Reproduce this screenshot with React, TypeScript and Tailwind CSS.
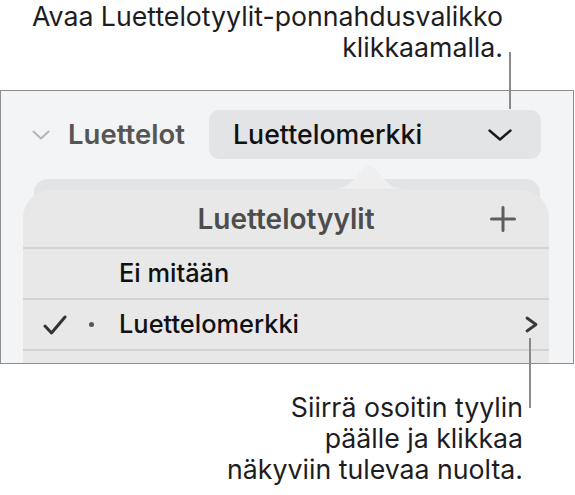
import React from "react";

export default function App() {
  return (
    <div className="relative w-[575px] h-[495px] bg-white font-['Inter','Noto_Sans',sans-serif] text-[#1d1d1f]">
      <div className="pt-[1px] pr-[72px] text-right text-[26.7px] leading-[31px] whitespace-nowrap">
        <div>Avaa Luettelotyylit-ponnahdusvalikko</div>
        <div>klikkaamalla.</div>
      </div>

      <div className="mt-[27px] w-[574px] h-[274px] border border-[#8e8e8e] bg-[#f3f4f6] overflow-hidden">
        <div className="mt-[19px] flex items-center h-[49px] pl-[31px]">
          <svg width="18" height="10" viewBox="0 0 18 10">
            <polyline points="1.5,1.5 9,8.5 16.5,1.5" fill="none" stroke="#b5b5b5" strokeWidth="2" strokeLinecap="round" strokeLinejoin="round" />
          </svg>
          <span className="ml-[18px] text-[27.5px] font-semibold text-[#555555] whitespace-nowrap">Luettelot</span>
          <div className="ml-auto mr-[32px] w-[332px] h-[49px] rounded-[10px] bg-[#e3e4e6] flex items-center justify-between pl-[24px] pr-[29px]">
            <span className="text-[26.7px] font-medium text-[#111111] whitespace-nowrap">Luettelomerkki</span>
            <svg width="24" height="12" viewBox="0 0 24 12">
              <polyline points="1.5,1.5 12,10.5 22.5,1.5" fill="none" stroke="#1a1a1a" strokeWidth="2.4" strokeLinecap="round" strokeLinejoin="round" />
            </svg>
          </div>
        </div>

        <div className="relative mt-[20px] ml-[33px] w-[506px] rounded-[14px] bg-[#e3e4e6] pt-[11px]">
          <svg className="absolute left-[300px] top-[-14px]" width="70" height="25" viewBox="0 0 70 25">
            <path d="M2,24 C20,23 26,1 35,1 C44,1 50,23 68,24 Z" fill="#efeff0" />
          </svg>
          <div className="ml-[-11px] mr-[-9px] rounded-t-[28px] bg-[#e8e8e8]">
            <div className="grid grid-cols-[1fr_auto_1fr] items-center h-[57px]">
              <div />
              <span className="text-[28px] font-semibold text-[#4d4d4d] whitespace-nowrap">Luettelotyylit</span>
              <svg className="justify-self-end mr-[33px]" width="26" height="26" viewBox="0 0 26 26">
                <path d="M13,1.5 V24.5 M1.5,13 H24.5" stroke="#5e5e5e" strokeWidth="3" strokeLinecap="round" />
              </svg>
            </div>
            <div className="h-[2px] bg-[#d3d3d3]" />
            <div className="flex items-center h-[49px] pl-[96px]">
              <span className="text-[25.4px] font-medium text-[#111111] whitespace-nowrap">Ei mitään</span>
            </div>
            <div className="h-[2px] bg-[#d3d3d3]" />
            <div className="flex items-center h-[49px] pl-[20px]">
              <svg width="24" height="20" viewBox="0 0 24 20">
                <polyline points="2,11 8.5,18 22,2" fill="none" stroke="#333333" strokeWidth="3" strokeLinecap="round" strokeLinejoin="round" />
              </svg>
              <div className="ml-[22px] w-[5px] h-[5px] rounded-full bg-[#555555]" />
              <span className="ml-[25px] text-[25.4px] font-medium text-[#111111] whitespace-nowrap">Luettelomerkki</span>
              <svg className="ml-auto mr-[11px]" width="13" height="17" viewBox="0 0 13 17">
                <polyline points="2,2 11,8.5 2,15" fill="none" stroke="#3a3a3a" strokeWidth="2.8" strokeLinecap="round" strokeLinejoin="round" />
              </svg>
            </div>
            <div className="h-[2px] bg-[#d3d3d3]" />
            <div className="h-[20px]" />
          </div>
        </div>
      </div>

      <div className="mt-[28px] pr-[52px] text-right text-[26.7px] leading-[31px] whitespace-nowrap">
        <div>Siirrä osoitin tyylin</div>
        <div>päälle ja klikkaa</div>
        <div>näkyviin tulevaa nuolta.</div>
      </div>

      <div className="absolute left-[509px] top-[52px] w-[2px] h-[57px] bg-[#8a8a8a]" />
      <div className="absolute left-[529px] top-[338px] w-[2px] h-[70px] bg-[#8a8a8a]" />
    </div>
  );
}
